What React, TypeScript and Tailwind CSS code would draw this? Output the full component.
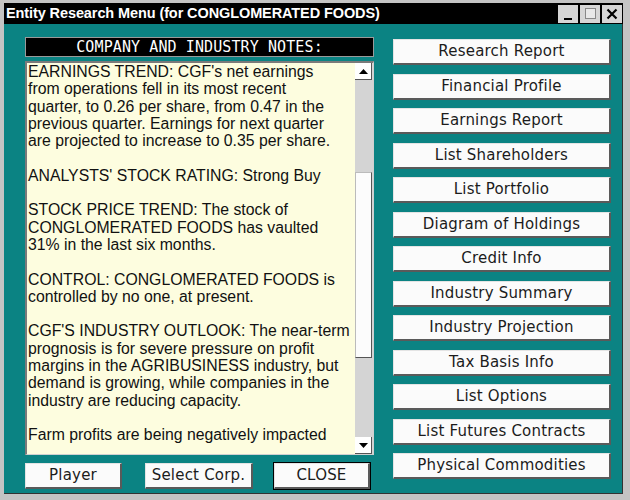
import React from 'react';

const menuButtons = [
    'Research Report',
    'Financial Profile',
    'Earnings Report',
    'List Shareholders',
    'List Portfolio',
    'Diagram of Holdings',
    'Credit Info',
    'Industry Summary',
    'Industry Projection',
    'Tax Basis Info',
    'List Options',
    'List Futures Contracts',
    'Physical Commodities',
];

// notes are laid out line by line, as the old text box wrapped them
const noteLines = [
    "EARNINGS TREND: CGF's net earnings",
    'from operations fell in its most recent',
    'quarter, to 0.26 per share, from 0.47 in the',
    'previous quarter. Earnings for next quarter',
    'are projected to increase to 0.35 per share.',
    '',
    "ANALYSTS' STOCK RATING: Strong Buy",
    '',
    'STOCK PRICE TREND: The stock of',
    'CONGLOMERATED FOODS has vaulted',
    '31% in the last six months.',
    '',
    'CONTROL: CONGLOMERATED FOODS is',
    'controlled by no one, at present.',
    '',
    "CGF'S INDUSTRY OUTLOOK: The near-term",
    'prognosis is for severe pressure on profit',
    'margins in the AGRIBUSINESS industry, but',
    'demand is growing, while companies in the',
    'industry are reducing capacity.',
    '',
    'Farm profits are being negatively impacted',
];

const uiFont = { fontFamily: '"DejaVu Sans", Verdana, sans-serif' };

function WinButton({ label, isDefault = false }: { label: string; isDefault?: boolean }) {
    return (
        <button
            className={`w-full h-[26px] bg-[#fbfbfb] border-t border-l border-[#e4e4e4] border-r-2 border-b-2 border-r-[#5a5a5a] border-b-[#5a5a5a] text-[15px] tracking-[0.2px] text-[#1c1c1c] whitespace-nowrap flex items-center justify-center ${isDefault ? 'outline outline-1 outline-black' : ''}`}
            style={uiFont}
        >
            {label}
        </button>
    );
}

function ScrollArrow({ up }: { up: boolean }) {
    return (
        <div className="w-[17px] h-[17px] bg-white border-r border-b border-[#555] flex items-center justify-center">
            <svg width="9" height="5" viewBox="0 0 9 5">
                {up ? <polygon points="4.5,0 9,5 0,5" fill="#000" /> : <polygon points="0,0 9,0 4.5,5" fill="#000" />}
            </svg>
        </div>
    );
}

export default function App() {
    return (
        <div
            className="w-[630px] h-[500px] bg-[#c4c4c4] pl-[4px] pr-[7px] pt-[3px] pb-[6px] flex flex-col overflow-hidden"
            style={{ fontFamily: '"Liberation Sans", Arial, sans-serif' }}
        >
            {/* Title bar */}
            <div className="h-[21px] bg-black flex items-center justify-between pl-[2px] pr-[1px]">
                <span className="text-white text-[14.5px] font-bold tracking-[-0.1px]">
                    Entity Research Menu (for CONGLOMERATED FOODS)
                </span>
                <div className="flex gap-[2px]">
                    <div className="w-[20px] h-[18px] bg-[#d6d6d6] flex items-end justify-center pb-[3px]">
                        <div className="w-[8px] h-[2px] bg-black" />
                    </div>
                    <div className="w-[20px] h-[18px] bg-[#d6d6d6] flex items-center justify-center">
                        <div className="w-[11px] h-[11px] border border-[#888] bg-[#e8e8e8]" />
                    </div>
                    <div className="w-[20px] h-[18px] bg-[#d6d6d6] flex items-center justify-center">
                        <svg width="12" height="12" viewBox="0 0 12 12">
                            <path d="M1.5 1.5 L10.5 10.5 M10.5 1.5 L1.5 10.5" stroke="#000" strokeWidth="2.2" />
                        </svg>
                    </div>
                </div>
            </div>

            {/* Body */}
            <div className="flex-1 bg-[#0b8383] border-r border-b border-[#333] flex pl-[21px] pt-[13px]">
                {/* Left column */}
                <div className="w-[349px] flex flex-col">
                    <div className="h-[20px] bg-black border border-[#9a9a9a] flex items-center justify-center">
                        <span
                            className="text-white text-[15px] tracking-[0.1px]"
                            style={{ fontFamily: '"DejaVu Sans Mono", monospace' }}
                        >
                            COMPANY AND INDUSTRY NOTES:
                        </span>
                    </div>
                    <div className="mt-[4px] h-[394px] bg-[#fdfddf] border-t-2 border-l-2 border-[#7a7a7a] border-r border-b border-r-[#d0d0d0] border-b-[#d0d0d0] flex">
                        <div className="flex-1 overflow-hidden pl-[1px] text-[15.8px] leading-[17.3px] text-[#111]">
                            {noteLines.map((line, i) => (
                                <div key={i} className="h-[17.3px] whitespace-nowrap">{line}</div>
                            ))}
                        </div>
                        <div className="w-[18px] bg-[#d4d4d4] flex flex-col">
                            <ScrollArrow up />
                            <div className="flex-1 pt-[92px] pb-[79px]">
                                <div className="w-[17px] h-full bg-[#fcfcfc] border border-[#bbb] border-r-[#555] border-b-[#555]" />
                            </div>
                            <ScrollArrow up={false} />
                        </div>
                    </div>
                    <div className="mt-[8px] flex items-center">
                        <div className="w-[97px]"><WinButton label="Player" /></div>
                        <div className="w-[108px] ml-[23px]"><WinButton label="Select Corp." /></div>
                        <div className="w-[96px] ml-[21px]"><WinButton label="CLOSE" isDefault /></div>
                    </div>
                </div>

                {/* Right column */}
                <div className="w-[218px] ml-[19px] pt-[2px] flex flex-col gap-[8.5px]">
                    {menuButtons.map((b) => (
                        <WinButton key={b} label={b} />
                    ))}
                </div>
            </div>
        </div>
    );
}
